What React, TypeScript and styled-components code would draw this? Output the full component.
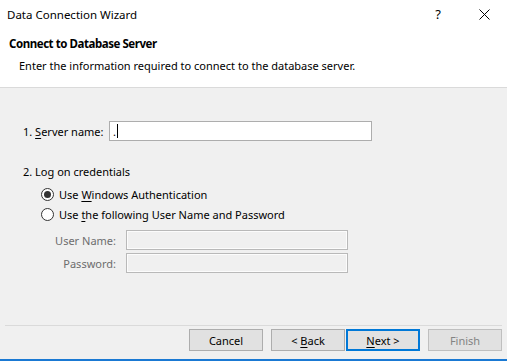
import React from "react";
import styled, { createGlobalStyle } from "styled-components";

const Global = createGlobalStyle`
    html, body {
        margin: 0;
        padding: 0;
        background: #f0f0f0;
    }
    body {
        font-family: "Noto Sans", "Open Sans", sans-serif;
        font-size: 11px;
        color: #000;
    }
`;

const Window = styled.div`
    width: 507px;
    height: 361px;
    display: flex;
    flex-direction: column;
    background: #f0f0f0;
    box-sizing: border-box;
    border-bottom: 2px solid #1a79d3;
`;

const TitleBar = styled.div`
    height: 28px;
    display: flex;
    align-items: center;
    background: #fff;
    padding-left: 7px;
`;

const Title = styled.div`
    flex: 1;
    font-size: 11.5px;
`;

const CaptionButton = styled.div`
    width: 46px;
    height: 28px;
    display: flex;
    align-items: center;
    justify-content: center;
    font-size: 13px;
`;

const Header = styled.div`
    height: 59px;
    background: #fff;
    border-bottom: 1px solid #dadada;
    padding-left: 9px;
`;

const Heading = styled.div`
    font-weight: bold;
    font-size: 11.5px;
    letter-spacing: -0.45px;
    margin-top: 8px;
`;

const SubHeading = styled.div`
    margin-top: 7px;
    padding-left: 10px;
`;

const Body = styled.div`
    flex: 1;
    padding: 33px 0 0 23px;
    display: flex;
    flex-direction: column;
`;

const Row = styled.div`
    display: flex;
    align-items: center;
    height: 20px;
    white-space: nowrap;
`;

const FieldLabel = styled.div<{ $width: number; $disabled?: boolean }>`
    width: ${(p) => p.$width}px;
    color: ${(p) => (p.$disabled ? "#6d6d6d" : "#000")};
`;

const RightLabel = styled(FieldLabel)`
    text-align: right;
    padding-right: 10px;
    box-sizing: content-box;
`;

const TextBox = styled.div<{ $width: number; $disabled?: boolean }>`
    width: ${(p) => p.$width}px;
    height: 20px;
    box-sizing: border-box;
    border: 1px solid ${(p) => (p.$disabled ? "#b9b9b9" : "#adadad")};
    background: ${(p) => (p.$disabled ? "#f0f0f0" : "#fff")};
    box-shadow: ${(p) => (p.$disabled ? "inset 0 0 0 1px #fcfcfc" : "none")};
    display: flex;
    align-items: center;
    padding-left: 3px;
`;

const Caret = styled.span`
    display: inline-block;
    width: 1px;
    height: 14px;
    background: #000;
    margin-left: 1px;
`;

const Section = styled.div`
    margin-top: 23px;
    height: 17px;
`;

const Radios = styled.div`
    margin-top: 3px;
    padding-left: 18px;
    display: flex;
    flex-direction: column;
`;

const RadioRow = styled(Row)`
    gap: 5px;
`;

const RadioCircle = styled.span<{ $checked?: boolean }>`
    width: 13px;
    height: 13px;
    box-sizing: border-box;
    border: 1px solid #333;
    border-radius: 50%;
    background: #fff;
    display: flex;
    align-items: center;
    justify-content: center;

    &::after {
        content: "";
        display: ${(p) => (p.$checked ? "block" : "none")};
        width: 7px;
        height: 7px;
        border-radius: 50%;
        background: #333;
    }
`;

const Credentials = styled.div`
    margin-top: 6px;
    display: flex;
    flex-direction: column;
    gap: 3px;
`;

const Footer = styled.div`
    height: 30px;
    margin: 0 5px;
    padding-top: 3px;
    border-top: 1px solid #dadada;
    display: flex;
    justify-content: flex-end;
`;

const Buttons = styled.div`
    display: flex;
    gap: 8px;
    height: 22px;
`;

const Pair = styled.div`
    display: flex;
    gap: 1px;
`;

const Button = styled.div<{ $default?: boolean; $disabled?: boolean }>`
    width: 74px;
    height: 22px;
    box-sizing: border-box;
    display: flex;
    align-items: center;
    justify-content: center;
    background: #e1e1e1;
    border: ${(p) =>
        p.$default
            ? "2px solid #0078d7"
            : `1px solid ${p.$disabled ? "#bfbfbf" : "#adadad"}`};
    color: ${(p) => (p.$disabled ? "#838383" : "#000")};
`;

const U = styled.span`
    text-decoration: underline;
    text-underline-offset: 2px;
`;

export default function App() {
    return (
        <Window>
            <Global />
            <TitleBar>
                <Title>Data Connection Wizard</Title>
                <CaptionButton>?</CaptionButton>
                <CaptionButton>
                    <svg width="11" height="11" viewBox="0 0 11 11">
                        <path d="M0.5 0.5 L10.5 10.5 M10.5 0.5 L0.5 10.5" stroke="#000" strokeWidth="1" />
                    </svg>
                </CaptionButton>
            </TitleBar>
            <Header>
                <Heading>Connect to Database Server</Heading>
                <SubHeading>Enter the information required to connect to the database server.</SubHeading>
            </Header>
            <Body>
                <Row>
                    <FieldLabel $width={86}>
                        1. <U>S</U>erver name:
                    </FieldLabel>
                    <TextBox $width={263}>
                        .<Caret />
                    </TextBox>
                </Row>
                <Section>2. Log on credentials</Section>
                <Radios>
                    <RadioRow>
                        <RadioCircle $checked />
                        <span>
                            Use <U>W</U>indows Authentication
                        </span>
                    </RadioRow>
                    <RadioRow>
                        <RadioCircle />
                        <span>
                            Use <U>t</U>he following User Name and Password
                        </span>
                    </RadioRow>
                </Radios>
                <Credentials>
                    <Row>
                        <RightLabel $width={93} $disabled>
                            User Name:
                        </RightLabel>
                        <TextBox $width={222} $disabled />
                    </Row>
                    <Row>
                        <RightLabel $width={93} $disabled>
                            Password:
                        </RightLabel>
                        <TextBox $width={222} $disabled />
                    </Row>
                </Credentials>
            </Body>
            <Footer>
                <Buttons>
                    <Button>Cancel</Button>
                    <Pair>
                        <Button>
                            &lt;&nbsp;<U>B</U>ack
                        </Button>
                        <Button $default>
                            <U>N</U>ext &gt;
                        </Button>
                    </Pair>
                    <Button $disabled>Finish</Button>
                </Buttons>
            </Footer>
        </Window>
    );
}
